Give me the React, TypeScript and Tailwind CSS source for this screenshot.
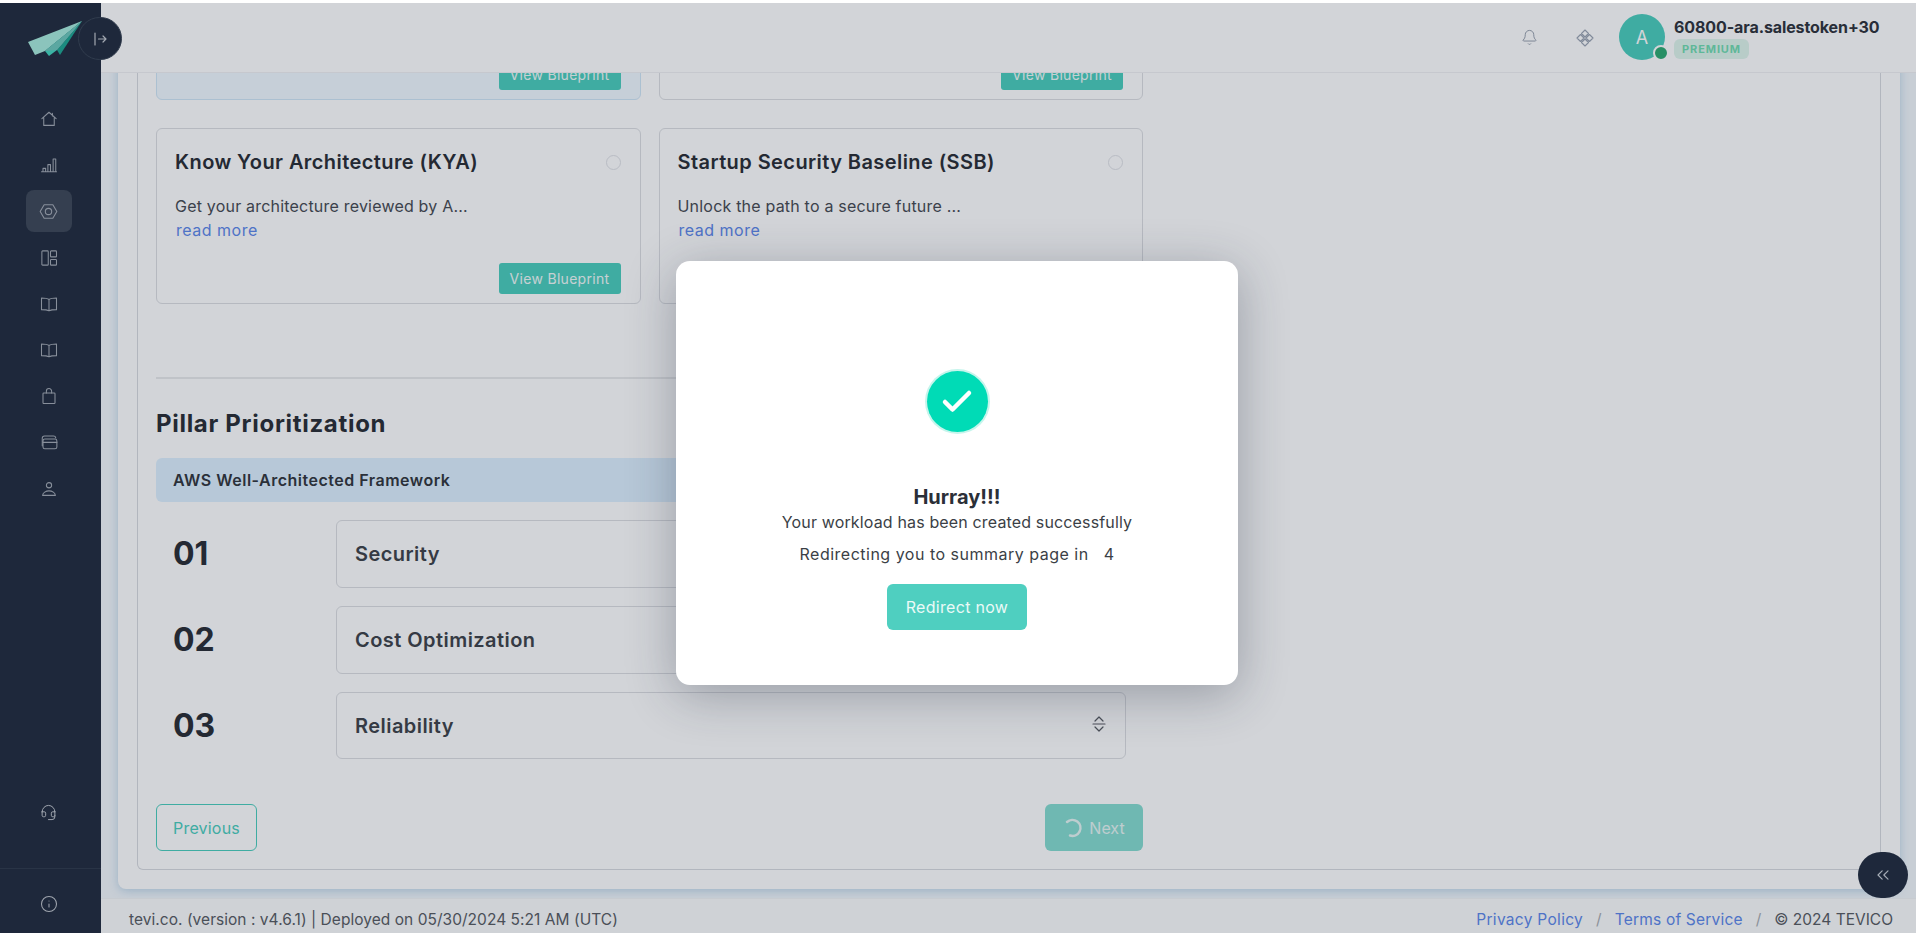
import { Bell, ChevronsLeft, Check, Headset, Info } from 'lucide-react'
import type { ReactNode } from 'react'

// sidebar icons, drawn to match the thin outline set in the screenshot
const Svg = ({ children, size = 18 }: { children: ReactNode; size?: number }) => (
  <svg width={size} height={size} viewBox="0 0 24 24" fill="none" stroke="currentColor" strokeWidth="1.4" strokeLinecap="round" strokeLinejoin="round">
    {children}
  </svg>
)

const HomeIcon = () => (
  <Svg>
    <path d="M2.500 11.500 12 3l9.500 8.500M5 10v10.500h14V10M16.500 4.500v3.500" />
  </Svg>
)
const BarsIcon = () => (
  <Svg>
    <path d="M2 21h20M4 20.500v-4h3.500v4M10.500 20.500v-9h3.500v9M17.500 20.500V4h3.500v16.500" />
  </Svg>
)
const HexIcon = () => (
  <Svg size={19}>
    <path d="M6.500 3.500h11l5 8.500-5 8.500h-11L1.500 12z" />
    <circle cx="12" cy="12" r="4" />
  </Svg>
)
const PanelsIcon = () => (
  <Svg>
    <rect x="2.500" y="2.500" width="8.500" height="19" rx="1" />
    <rect x="14" y="2.500" width="8" height="8" rx="1" />
    <rect x="14" y="14" width="8" height="7.500" rx="1" />
  </Svg>
)
const BookIcon = () => (
  <Svg>
    <path d="M12 6c-2-1.500-5-2-10-2v15.500c5 0 8 .5 10 1.500 2-1 5-1.500 10-1.500V4C17 4 14 4.500 12 6zM12 6v15" />
  </Svg>
)
const BagIcon = () => (
  <Svg>
    <rect x="4" y="8" width="16" height="14" rx="1" />
    <path d="M8.500 8V5.500a3.500 3.500 0 0 1 7 0V8" />
  </Svg>
)
const CardsIcon = () => (
  <Svg>
    <path d="M3 17V7a3 3 0 0 1 3-3h12a3 3 0 0 1 3 2.500" />
    <rect x="4" y="8" width="18.500" height="13" rx="2.500" />
    <path d="M4 12.500h18.500" />
  </Svg>
)
const PersonIcon = () => (
  <Svg>
    <circle cx="12" cy="7" r="3.500" />
    <path d="M3.500 20.500c0-3.500 4.500-6 8.500-6s8.500 2.500 8.500 6z" />
  </Svg>
)
const SortIcon = () => (
  <svg width="16" height="18" viewBox="0 0 16 18" fill="none" stroke="currentColor" strokeWidth="1.200" strokeLinecap="round" strokeLinejoin="round">
    <path d="M4 6l4-4 4 4M2 9h12M4 12l4 4 4-4" />
  </svg>
)

const navIcons = [HomeIcon, BarsIcon, HexIcon, PanelsIcon, BookIcon, BookIcon, BagIcon, CardsIcon, PersonIcon]

function Logo() {
  return (
    <svg width="54" height="35" viewBox="0 0 54 35">
      <polygon points="0,21 7,34 17,30 54,0" fill="#a7ecdd" />
      <polygon points="17,30 21,35 29,29 54,0" fill="#41d8bf" />
      <polygon points="29,29 32,34 54,0" fill="#1ba691" />
      <polygon points="17,30 29,29 54,0" fill="#6cc7bb" />
    </svg>
  )
}

function Sidebar() {
  return (
    <aside className="w-[101px] shrink-0 bg-[#1e293b] text-[#a3a9b3] flex flex-col relative z-[15]">
      <div className="h-[69px] flex items-start pl-[28px] pt-[18px]">
        <Logo />
      </div>
      {/* collapse toggle sits half over the header */}
      <button className="absolute left-[78px] top-[14px] w-[44px] h-[43px] rounded-full bg-[#1e293b] border border-[#364152] flex items-center justify-center">
        <svg width="14" height="14" viewBox="0 0 14 14" fill="none" stroke="#c4c8cf" strokeWidth="1.200" strokeLinecap="round" strokeLinejoin="round">
          <path d="M2 1v12M5.500 7H13M10 4l3 3-3 3" />
        </svg>
      </button>
      <nav className="flex flex-col items-center pr-[4px] mt-[26px] gap-[4.200px]">
        {navIcons.map((Icon, i) => (
          <div key={i} className={`w-[46px] h-[42px] rounded-[8px] flex items-center justify-center ${i === 2 ? 'bg-[#3b4555]' : ''}`}>
            <Icon />
          </div>
        ))}
      </nav>
      <div className="mt-auto flex flex-col items-center">
        <div className="h-[64px] w-full pr-[4px] flex items-start justify-center text-[#c0c4cb]">
          <Headset size={17} strokeWidth={1.4} />
        </div>
        <div className="h-[65px] w-full pr-[4px] pt-[6px] border-t border-[#2c3749] flex items-center justify-center text-[#c0c4cb]">
          <Info size={18} strokeWidth={1.4} />
        </div>
      </div>
    </aside>
  )
}

function Header() {
  return (
    <header className="h-[70px] shrink-0 bg-white border-b border-[#f0f1f3] flex items-center justify-end pr-[36px] relative z-10">
      <div className="text-[#8d96a6] mr-[38px]">
        <Bell size={17} strokeWidth={1.3} />
      </div>
      <svg className="mr-[25px] text-[#9aa3b2]" width="18" height="18" viewBox="0 0 18 18" fill="none" stroke="currentColor" strokeWidth="1.100" strokeLinejoin="round">
        <path d="M9 1l3.500 3.500L9 8 5.500 4.500zM9 10l3.500 3.500L9 17l-3.500-3.500zM4.500 5.500L8 9l-3.500 3.500L1 9zM13.500 5.500L17 9l-3.500 3.500L10 9z" />
      </svg>
      <div className="relative w-[46px] h-[46px] rounded-full bg-[#48cdbc] text-white flex items-center justify-center text-[18px] mr-[9px] mb-[1px]">
        A
        <span className="absolute right-[-4px] bottom-[-1px] w-[16px] h-[16px] rounded-full bg-[#2aa970] border-2 border-white" />
      </div>
      <div className="flex flex-col items-start w-[206px]">
        <div className="text-[16px] leading-[20px] font-bold text-[#2b2f38] tracking-[-0.1px] whitespace-nowrap">60800-ara.salestoken+30</div>
        <span className="mt-[2px] rounded-[6px] bg-[#dff5ec] text-[#6fdcb0] text-[11px] leading-[20px] font-bold px-[8px] tracking-[0.9px]">PREMIUM</span>
      </div>
    </header>
  )
}

function ViewButton() {
  return (
    <button className="w-[122px] h-[31px] rounded-[3px] bg-[#48cdbc] text-[#f0fbf9] text-[14px] tracking-[0.3px] flex items-center justify-center">
      View Blueprint
    </button>
  )
}

interface BlueprintCardProps {
  title?: string
  text?: string
  selected?: boolean
}

function BlueprintCard({ title, text, selected }: BlueprintCardProps) {
  return (
    <div className={`h-[176px] rounded-[6px] border-[1.500px] pl-[18px] pr-[19px] pb-[9px] flex flex-col ${selected ? 'bg-[#f0f9ff] border-[#cfe6f7]' : 'bg-white border-[#dcdee2]'}`}>
      {title && (
        <>
          <div className="flex items-center justify-between mt-[20px]">
            <h3 className="text-[20px] leading-[26px] font-semibold text-[#262a31] tracking-[0.42px]">{title}</h3>
            <span className="w-[15px] h-[15px] rounded-full border border-[#e0e2e6] bg-white" />
          </div>
          <p className="mt-[20px] text-[16px] leading-[22px] tracking-[0.2px] text-[#44484f]">{text}</p>
          <a className="ml-[1px] mt-[2px] text-[16px] leading-[22px] tracking-[0.5px] text-[#5b86ea]">read more</a>
        </>
      )}
      <div className="mt-auto flex justify-end">
        <ViewButton />
      </div>
    </div>
  )
}

const pillars = [
  { n: '01', name: 'Security', h: 'h-[68px]' },
  { n: '02', name: 'Cost Optimization', h: 'h-[68px]' },
  { n: '03', name: 'Reliability', h: 'h-[67px]' },
]

function PillarRow({ n, name, h }: { n: string; name: string; h: string }) {
  return (
    <div className="flex items-center">
      <div className="w-[180px] pl-[17px] text-[32px] leading-none font-bold text-[#262a31]">{n}</div>
      <div className={`w-[790px] ${h} rounded-[6px] border-[1.500px] border-[#dcdee2] flex items-center justify-between pl-[18px] pr-[18px]`}>
        <span className="text-[20px] font-semibold text-[#3b3f46] tracking-[0.45px]">{name}</span>
        <span className="text-[#55595f] -mt-[3px]">
          <SortIcon />
        </span>
      </div>
    </div>
  )
}

function Content() {
  return (
    <div className="w-[987px]">
      <div className="grid grid-cols-2 gap-x-[18px] gap-y-[28px]">
        <BlueprintCard selected />
        <BlueprintCard />
        <BlueprintCard title="Know Your Architecture (KYA)" text="Get your architecture reviewed by A..." />
        <BlueprintCard title="Startup Security Baseline (SSB)" text="Unlock the path to a secure future ..." />
      </div>

      <div className="mt-[73px] border-t-2 border-[#e9eaec]" />
      <h2 className="mt-[28px] text-[24px] leading-[34px] font-bold text-[#262a31] tracking-[0.7px]">Pillar Prioritization</h2>

      {/* pillar list */}
      <div className="mt-[17px] w-[969px] h-[44px] rounded-[6px] bg-[#def1ff] flex items-center pl-[17px] text-[16px] font-semibold tracking-[0.5px] text-[#2e3239]">
        AWS Well-Architected Framework
      </div>
      <div className="mt-[18px] flex flex-col gap-[18px]">
        {pillars.map((p) => (
          <PillarRow key={p.n} {...p} />
        ))}
      </div>

      <div className="mt-[45px] flex justify-between">
        <button className="w-[101px] h-[47px] rounded-[6px] border-[1.500px] border-[#48cdbc] text-[#48cdbc] text-[16px] tracking-[0.2px]">Previous</button>
        <button className="w-[98px] h-[47px] rounded-[6px] bg-[#84dcd0] text-[#e6f7f4] text-[16px] flex items-center justify-center gap-[6px]">
          <svg width="20" height="20" viewBox="0 0 20 20" fill="none" stroke="currentColor" strokeWidth="2.500" strokeLinecap="round">
            <path d="M4 4a8 8 0 1 1 3 13.500" />
          </svg>
          Next
        </button>
      </div>
    </div>
  )
}

function Footer() {
  return (
    <footer className="h-[35px] shrink-0 bg-[#fcfdfd] relative z-10 border-t border-[#f2f4f6] flex items-center justify-between pt-[7px] pl-[28px] pr-[23px] text-[15.500px] text-[#55595f]">
      <span className="tracking-[0.04px]">tevi.co. (version : v4.6.1) | Deployed on 05/30/2024 5:21 AM (UTC)</span>
      <div className="flex items-center">
        <a className="text-[#5b86ea] tracking-[0.3px]">Privacy Policy</a>
        <span className="mx-[13px] text-[#a8acb2]">/</span>
        <a className="text-[#5b86ea] tracking-[0.2px]">Terms of Service</a>
        <span className="mx-[13px] text-[#a8acb2]">/</span>
        <span>© 2024 TEVICO</span>
      </div>
    </footer>
  )
}

function SuccessModal() {
  return (
    <div className="absolute inset-x-0 top-[3px] bottom-0 z-20 bg-[#1e293b]/20 flex items-center justify-center pt-[10px] pr-[2px]">
      <div className="w-[562px] h-[424px] rounded-[14px] bg-white shadow-[0_10px_50px_rgba(30,41,59,0.32)] flex flex-col items-center pt-[110px] text-[#3b3f46]">
        <div className="w-[61px] h-[61px] rounded-full bg-[#00dbb6] ring-2 ring-[#c6f5ec] flex items-center justify-center">
          <Check size={36} color="white" strokeWidth={3} />
        </div>
        <div className="mt-[52px] text-[20px] leading-[26px] font-bold text-[#2b2f38]">Hurray!!!</div>
        <div className="mt-[1px] text-[16px] leading-[22px] tracking-[0.15px]">Your workload has been created successfully</div>
        <div className="mt-[10px] text-[16px] leading-[22px] tracking-[0.5px] whitespace-pre">Redirecting you to summary page in   4</div>
        <button className="mt-[19px] w-[140px] h-[46px] rounded-[6px] bg-[#4fcfc0] text-[#eafaf7] text-[16px] tracking-[0.3px]">Redirect now</button>
      </div>
    </div>
  )
}

export default function App() {
  return (
    <div className="relative h-[933px] pt-[3px] overflow-hidden flex bg-white font-['Inter','Liberation_Sans',sans-serif]">
      <Sidebar />
      <div className="flex-1 min-w-0 flex flex-col">
        <Header />
        {/* page is scrolled, so the top row of cards is cut off under the header */}
        <main className="flex-1 min-h-0 overflow-hidden bg-[#f3f8fc] flex flex-col justify-end pl-[17px] pr-[16px] pb-[9px]">
          <div className="shrink-0 rounded-b-[8px] bg-white px-[19px] pb-[19px] shadow-[0_2px_10px_rgba(120,170,210,0.45)]">
            <div className="border-x border-b border-[#d8dadf] rounded-b-[6px] pl-[18px] pb-[18px]">
              <Content />
            </div>
          </div>
        </main>
        <Footer />
      </div>
      <button className="absolute right-[8px] bottom-[35px] z-10 w-[50px] h-[46px] rounded-full bg-[#1e293b] text-[#c9ced6] flex items-center justify-center">
        <ChevronsLeft size={20} strokeWidth={1.4} />
      </button>
      <SuccessModal />
    </div>
  )
}
